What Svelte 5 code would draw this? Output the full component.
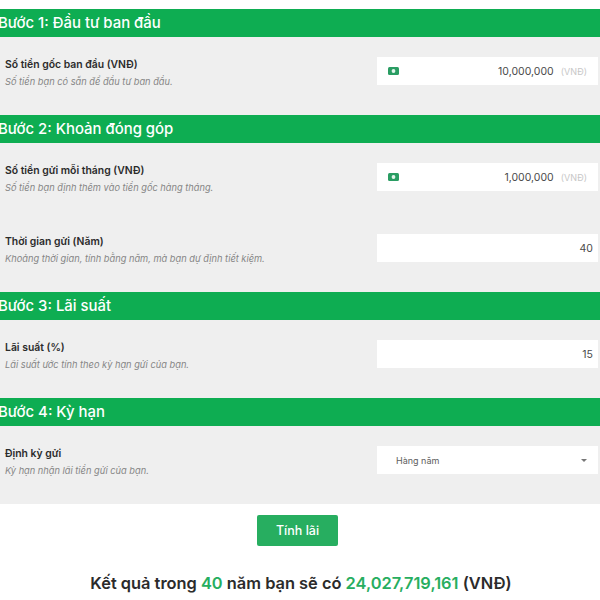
<script>
  const sections = [
    {
      title: 'Bước 1: Đầu tư ban đầu',
      rows: [
        { label: 'Số tiền gốc ban đầu (VNĐ)', hint: 'Số tiền bạn có sẵn để đầu tư ban đầu.', value: '10,000,000', money: true }
      ]
    },
    {
      title: 'Bước 2: Khoản đóng góp',
      rows: [
        { label: 'Số tiền gửi mỗi tháng (VNĐ)', hint: 'Số tiền bạn định thêm vào tiền gốc hàng tháng.', value: '1,000,000', money: true },
        { label: 'Thời gian gửi (Năm)', hint: 'Khoảng thời gian, tính bằng năm, mà bạn dự định tiết kiệm.', value: '40' }
      ]
    },
    {
      title: 'Bước 3: Lãi suất',
      rows: [
        { label: 'Lãi suất (%)', hint: 'Lãi suất ước tính theo kỳ hạn gửi của bạn.', value: '15' }
      ]
    },
    {
      title: 'Bước 4: Kỳ hạn',
      rows: [
        { label: 'Định kỳ gửi', hint: 'Kỳ hạn nhận lãi tiền gửi của bạn.', select: 'Hàng năm' }
      ]
    }
  ];
</script>

<div class="page">
  {#each sections as section}
    <h2 class="step"><span>{section.title}</span></h2>
    <div class="rows">
      {#each section.rows as row}
        <div class="row">
          <div class="info">
            <div class="label">{row.label}</div>
            <div class="hint">{row.hint}</div>
          </div>
          {#if row.select}
            <div class="field select">
              <span>{row.select}</span>
              <i class="caret"></i>
            </div>
          {:else}
            <div class="field">
              {#if row.money}
                <svg class="money" width="11" height="8" viewBox="0 0 11 8">
                  <rect width="11" height="8" rx="1.5" fill="#2a9d63" />
                  <circle cx="5.5" cy="4" r="1.9" fill="#e4f5ec" />
                </svg>
              {/if}
              <span class="value">{row.value}</span>
              {#if row.money}<span class="unit">(VNĐ)</span>{/if}
            </div>
          {/if}
        </div>
      {/each}
    </div>
  {/each}

  <div class="actions">
    <button>Tính lãi</button>
  </div>

  <p class="result">
    Kết quả trong <b>40</b> năm bạn sẽ có <b>24,027,719,161</b> (VNĐ)
  </p>
</div>

<style>
  :global(body) {
    margin: 0;
    background: #fff;
  }

  .page {
    width: 600px;
    height: 600px;
    overflow: hidden;
    padding-top: 9px;
    box-sizing: border-box;
    font-family: Inter, "Noto Sans", sans-serif;
  }

  .step {
    height: 28px;
    margin: 0;
    background: #0ead52;
    color: #fff;
    font-size: 14.9px;
    font-weight: 500;
    line-height: 28px;
  }

  .step span {
    display: block;
    margin-left: -2px;
  }

  .rows {
    display: flex;
    flex-direction: column;
    gap: 43px;
    padding: 20px 2px 30px 2px;
    background: #efefef;
  }

  .row {
    display: flex;
    justify-content: space-between;
    height: 28px;
  }

  .info {
    padding-left: 3px;
  }

  .label {
    padding-top: 1px;
    color: #2b2b2b;
    font-size: 10.4px;
    font-weight: 600;
    line-height: 13px;
  }

  .hint {
    margin-top: 5px;
    color: #858585;
    font-size: 9.25px;
    font-style: italic;
    line-height: 12px;
  }

  .field {
    display: flex;
    align-items: center;
    width: 221px;
    height: 28px;
    padding: 0 5px 0 11px;
    box-sizing: border-box;
    background: #fff;
    color: #4a4a4a;
    font-size: 10.5px;
  }

  .value {
    margin-left: auto;
  }

  .unit {
    margin-left: 7px;
    margin-right: 6px;
    color: #c8c8c8;
    font-size: 9px;
  }

  .select {
    justify-content: space-between;
    padding: 0 11px 0 19px;
    font-size: 9px;
    color: #606060;
  }

  .caret {
    width: 0;
    height: 0;
    border-left: 3px solid transparent;
    border-right: 3px solid transparent;
    border-top: 3px solid #777;
  }

  .actions {
    display: flex;
    justify-content: center;
    padding: 11px 5px 0 0;
  }

  button {
    width: 81px;
    height: 31px;
    padding: 0;
    border: none;
    border-radius: 2px;
    background: #27ae60;
    color: #fff;
    font-family: inherit;
    font-size: 12.5px;
    font-weight: 500;
  }

  .result {
    margin: 27px 0 0;
    padding-left: 2px;
    color: #2b2b2b;
    font-size: 16.4px;
    font-weight: 600;
    line-height: 20px;
    text-align: center;
  }

  .result b {
    color: #27ae60;
    font-weight: 600;
  }
</style>
